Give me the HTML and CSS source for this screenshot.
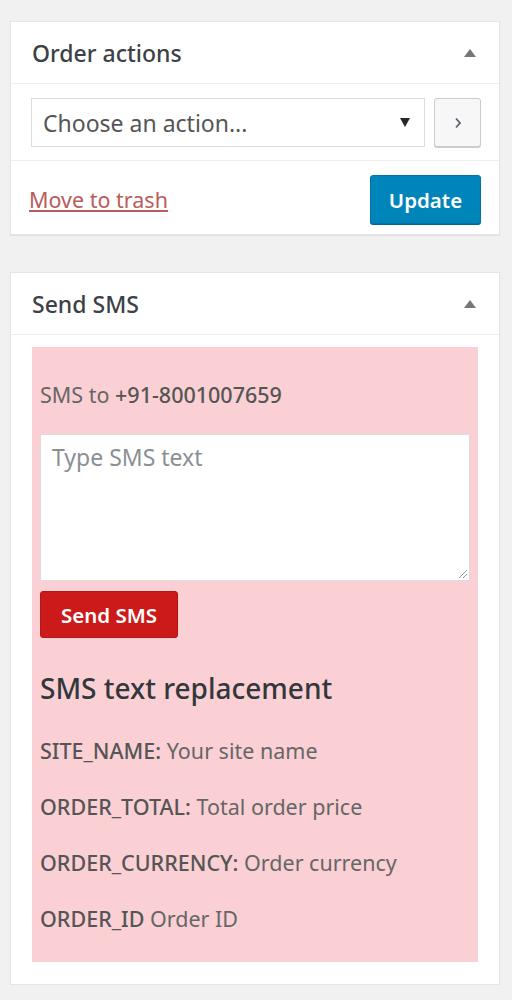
FILE: index.html
```html
<!DOCTYPE html>
<html>
<head>
<meta charset="utf-8">
<link rel="stylesheet" href="styles.css">
</head>
<body>
<div class="postbox">
  <div class="hndle"><span class="title">Order actions</span><span class="toggle"></span></div>
  <div class="actions">
    <div class="select"><span>Choose an action...</span><span class="caret"></span></div>
    <button class="go"><svg width="10" height="14" viewBox="0 0 10 14"><path d="M3 2.5 L7 7 L3 11.5" fill="none" stroke="#5a6470" stroke-width="1.8"/></svg></button>
  </div>
  <div class="footer">
    <a class="trash">Move to trash</a>
    <button class="update">Update</button>
  </div>
</div>

<div class="postbox second">
  <div class="hndle"><span class="title">Send SMS</span><span class="toggle"></span></div>
  <div class="sms">
    <p class="to">SMS to <b>+91-8001007659</b></p>
    <div class="textarea"><span class="ph">Type SMS text</span><svg class="grip" width="12" height="12" viewBox="0 0 12 12"><path d="M11 3 L3 11 M11 7 L7 11" stroke="#999" stroke-width="1"/></svg></div>
    <button class="send">Send SMS</button>
    <h3 class="rep">SMS text replacement</h3>
    <p class="item"><b>SITE_NAME:</b> Your site name</p>
    <p class="item"><b>ORDER_TOTAL:</b> Total order price</p>
    <p class="item"><b>ORDER_CURRENCY:</b> Order currency</p>
    <p class="item"><b>ORDER_ID</b> Order ID</p>
  </div>
</div>
</body>
</html>
```

FILE: styles.css
```css
html, body { margin: 0; padding: 0; }
body {
  background: #f1f1f1;
  font-family: "Noto Sans", "Open Sans", sans-serif;
  color: #444;
  padding: 21px 12px 0 10px;
  width: 490px;
}
.postbox {
  background: #fff;
  border: 1px solid #e5e5e5;
  box-shadow: 0 1px 1px rgba(0,0,0,.06);
  box-sizing: border-box;
  width: 490px;
}
.second { margin-top: 37px; }
.hndle {
  height: 62px;
  box-sizing: border-box;
  padding: 0 23px 0 21px;
  display: flex;
  align-items: center;
  justify-content: space-between;
  border-bottom: 1px solid #eee;
}
.title { font-size: 23px; font-weight: 500; color: #3c4146; }
.toggle {
  width: 0; height: 0;
  border-left: 6px solid transparent;
  border-right: 6px solid transparent;
  border-bottom: 8px solid #72777c;
}
.actions {
  display: flex;
  gap: 9px;
  padding: 14px 18px 13px 20px;
  border-bottom: 1px solid #eee;
}
.select {
  width: 394px;
  height: 49px;
  box-sizing: border-box;
  border: 1px solid #ddd;
  display: flex;
  align-items: center;
  justify-content: space-between;
  padding: 0 14px 0 11px;
  font-size: 23px;
  color: #555;
}
.caret {
  width: 0; height: 0;
  border-left: 5px solid transparent;
  border-right: 5px solid transparent;
  border-top: 9px solid #23282d;
}
.go {
  width: 47px; height: 49px;
  box-sizing: border-box;
  border: 1px solid #ccc;
  border-radius: 3px;
  background: #f7f7f7;
  box-shadow: 0 1px 0 #ccc;
  display: flex; align-items: center; justify-content: center;
  padding: 0;
}
.footer {
  display: flex;
  justify-content: space-between;
  align-items: center;
  padding: 14px 18px 10px 18px;
}
.trash {
  font-size: 21.5px;
  text-decoration: underline;
  color: #b85c5c;
}
.update {
  width: 111px; height: 49px;
  background: #0085ba;
  border: 1px solid #0073aa;
  border-radius: 3px;
  box-shadow: 0 1px 0 #006799;
  color: #fff;
  font-family: inherit;
  font-size: 20.5px;
  font-weight: 600;
  padding: 0;
}
.sms {
  background: #fad0d4;
  margin: 12px 21px 22px 21px;
  padding: 27px 8px 26px 8px;
}
.to { margin: 0; font-size: 21.5px; line-height: 42px; color: #666; }
.to b { color: #555; font-weight: 500; }
.textarea {
  margin-top: 18px;
  height: 147px;
  width: 430px;
  box-sizing: border-box;
  background: #fff;
  border: 1px solid #ddd;
  position: relative;
  padding: 6px 11px;
}
.ph { font-size: 23px; color: #8a8f94; }
.grip { position: absolute; right: 1px; bottom: 1px; }
.send {
  margin-top: 10px;
  width: 138px; height: 47px;
  background: #cc1a1a;
  border: 1px solid #b51515;
  border-radius: 3px;
  color: #fff;
  font-family: inherit;
  font-size: 20.5px;
  font-weight: 600;
  padding: 0;
  display: block;
}
.rep {
  margin: 30px 0 26px;
  font-size: 28px;
  font-weight: 500;
  color: #32373c;
  line-height: 40px;
}
.item { margin: 0 0 22px; font-size: 21.5px; line-height: 34px; color: #666; }
.item:last-child { margin-bottom: 0; }
.item b { color: #555; font-weight: 500; }
```
